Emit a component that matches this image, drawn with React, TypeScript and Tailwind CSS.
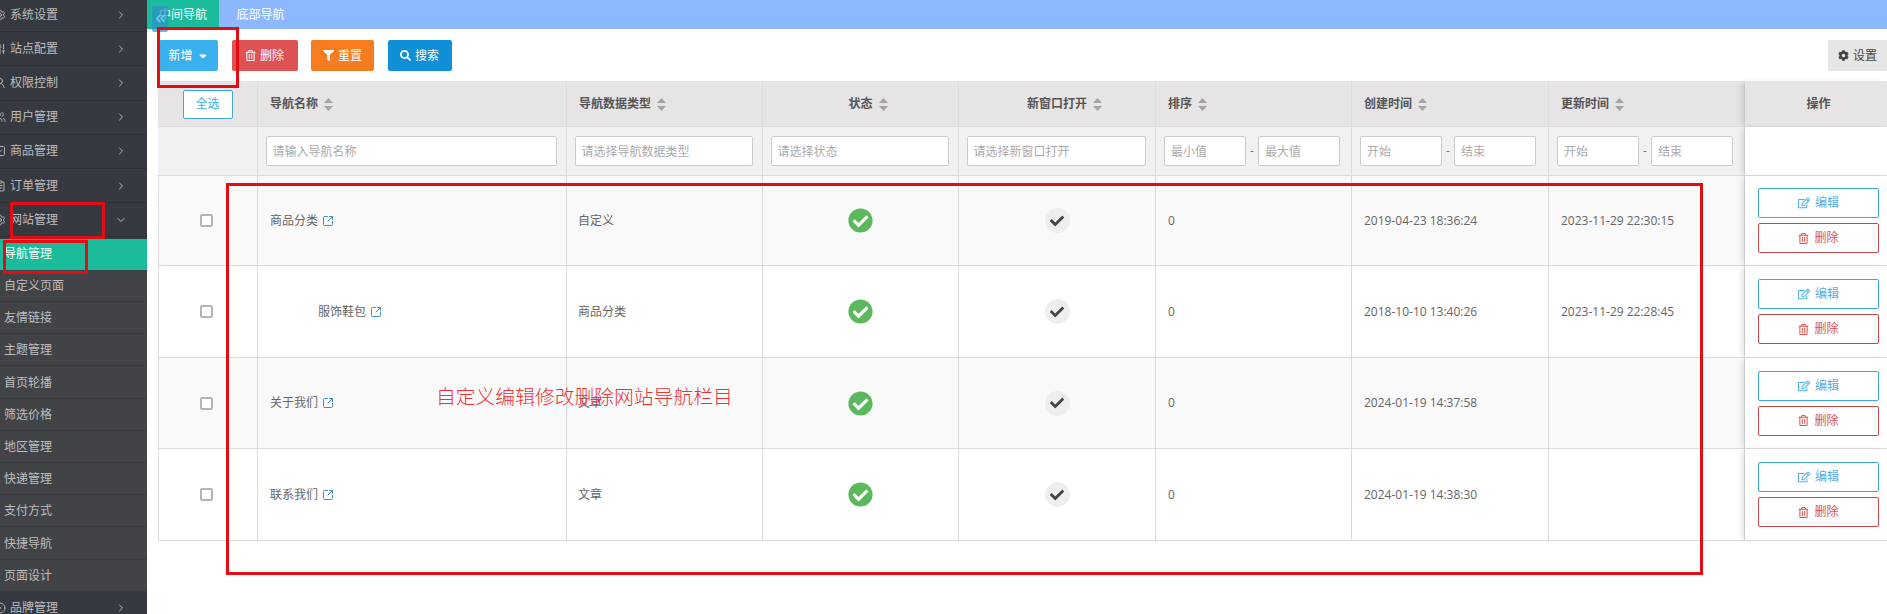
import React from "react";
import {
  ChevronRight,
  ChevronDown,
  ChevronsLeft,
  Settings,
  SlidersVertical,
  UserRound,
  Users,
  SquareCheck,
  ClipboardList,
  CircleDot,
  SquareArrowOutUpRight,
} from "lucide-react";
import {
  FaCaretDown,
  FaCheck,
  FaCheckCircle,
  FaCog,
  FaFilter,
  FaRegEdit,
  FaRegTrashAlt,
  FaSearch,
} from "react-icons/fa";

const FONT = { fontFamily: '"Open Sans","Noto Sans CJK SC",sans-serif' };

const topBefore = [
  { label: "系统设置", Icon: Settings },
  { label: "站点配置", Icon: SlidersVertical },
  { label: "权限控制", Icon: UserRound },
  { label: "用户管理", Icon: Users },
  { label: "商品管理", Icon: SquareCheck },
  { label: "订单管理", Icon: ClipboardList },
];
const subs = ["自定义页面", "友情链接", "主题管理", "首页轮播", "筛选价格", "地区管理", "快递管理", "支付方式", "快捷导航", "页面设计"];

function TopItem({ label, Icon, open }: { label: string; Icon: React.ComponentType<any>; open?: boolean }) {
  return (
    <div className="flex h-[34.2px] shrink-0 items-center border-b border-[#2e3034] bg-[#36393f] text-[12px] text-[#bdbec0]">
      <Icon size={12} className="ml-[-6px] mr-[4px] shrink-0 text-[#b0b1b4]" />
      <span className="flex-1">{label}</span>
      {open ? (
        <ChevronDown size={12} className="mr-[20px] text-[#b8b9bb]" />
      ) : (
        <ChevronRight size={12} className="mr-[20px] text-[#b8b9bb]" />
      )}
    </div>
  );
}

function Sidebar() {
  return (
    <aside className="flex h-[614px] w-[147px] shrink-0 flex-col overflow-hidden bg-[#36393f]">
      <div className="mt-[-2px]" />
      {topBefore.map((t) => (
        <TopItem key={t.label} {...t} />
      ))}
      <div className="mb-[1.6px]">
        <TopItem label="网站管理" Icon={Settings} open />
      </div>
      <div className="flex h-[31px] shrink-0 items-center bg-[#1abc9c] pl-[4px] text-[12px] text-white">导航管理</div>
      {subs.map((s) => (
        <div
          key={s}
          className="flex h-[32.2px] shrink-0 items-center border-b border-[#393b3f] bg-[#414347] pl-[4px] pt-[1px] text-[12px] text-[#bdbec0]"
        >
          {s}
        </div>
      ))}
      <TopItem label="品牌管理" Icon={CircleDot} />
    </aside>
  );
}

function Sort() {
  return (
    <svg width="9" height="13" viewBox="0 0 9 13" className="ml-[6px] inline-block shrink-0 fill-[#a5a5a5]">
      <path d="M4.5 0 L9 5 H0 Z" />
      <path d="M0 8 H9 L4.5 13 Z" />
    </svg>
  );
}

const headCell = "border-r border-b border-[#dcdcdc] bg-[#e6e4e5] pt-[1px] text-[12px] font-bold text-[#555]";
const filterCell = "border-r border-b border-[#dcdcdc] bg-[#f1f1f1]";
const inputCls =
  "h-[30px] min-w-0 rounded-[2px] border border-[#ccc] bg-white px-[6px] text-[12px] text-[#555] outline-none placeholder:text-[#aaa]";

function Head({ label, center }: { label: string; center?: boolean }) {
  return (
    <th className={headCell}>
      <div className={`flex items-center ${center ? "justify-center pl-[15px]" : "pl-[12px]"}`}>
        {label}
        <Sort />
      </div>
    </th>
  );
}

function TextFilter({ ph }: { ph: string }) {
  return (
    <td className={`${filterCell} pl-[7.5px] pr-[9.5px]`}>
      <input className={`${inputCls} w-full`} placeholder={ph} readOnly />
    </td>
  );
}

function RangeFilter({ a, b }: { a: string; b: string }) {
  return (
    <td className={`${filterCell} pl-[8px]`}>
      <div className="flex items-center">
        <input className={`${inputCls} w-[82px]`} placeholder={a} readOnly />
        <span className="w-[12px] shrink-0 text-center text-[12px] text-[#777]">-</span>
        <input className={`${inputCls} w-[82px]`} placeholder={b} readOnly />
      </div>
    </td>
  );
}

const rows = [
  { name: "商品分类", indent: false, type: "自定义", created: "2019-04-23 18:36:24", updated: "2023-11-29 22:30:15", h: "h-[90px]" },
  { name: "服饰鞋包", indent: true, type: "商品分类", created: "2018-10-10 13:40:26", updated: "2023-11-29 22:28:45", h: "h-[92px]" },
  { name: "关于我们", indent: false, type: "文章", created: "2024-01-19 14:37:58", updated: "", h: "h-[91px]" },
  { name: "联系我们", indent: false, type: "文章", created: "2024-01-19 14:38:30", updated: "", h: "h-[92px]" },
];

function Table() {
  const actionShadow = "shadow-[-5px_0_6px_-2px_rgba(0,0,0,0.12)]";
  return (
    <table className="w-[1729px] table-fixed border-separate border-spacing-0">
      <colgroup>
        <col className="w-[100px]" />
        <col className="w-[309px]" />
        <col className="w-[196px]" />
        <col className="w-[196px]" />
        <col className="w-[197px]" />
        <col className="w-[196px]" />
        <col className="w-[197px]" />
        <col className="w-[196px]" />
        <col className="w-[142px]" />
      </colgroup>
      <thead>
        <tr className="h-[46px]">
          <th className={headCell}>
            <button className="mx-auto block h-[29px] w-[50px] rounded-[2px] border border-[#3ea8dc] bg-white text-[12px] font-normal text-[#3bb0e8]">
              全选
            </button>
          </th>
          <Head label="导航名称" />
          <Head label="导航数据类型" />
          <Head label="状态" center />
          <Head label="新窗口打开" center />
          <Head label="排序" />
          <Head label="创建时间" />
          <Head label="更新时间" />
          <th className={`${headCell} border-r-0 pl-[5px] ${actionShadow}`}>操作</th>
        </tr>
        <tr className="h-[49px]">
          <td className={filterCell} />
          <TextFilter ph="请输入导航名称" />
          <TextFilter ph="请选择导航数据类型" />
          <TextFilter ph="请选择状态" />
          <TextFilter ph="请选择新窗口打开" />
          <RangeFilter a="最小值" b="最大值" />
          <RangeFilter a="开始" b="结束" />
          <RangeFilter a="开始" b="结束" />
          <td className={`border-b border-[#dcdcdc] bg-white ${actionShadow}`} />
        </tr>
      </thead>
      <tbody>
        {rows.map((r, i) => {
          const bg = i % 2 === 0 ? "bg-[#f9f9f9]" : "bg-white";
          const cell = `border-r border-b border-[#dcdcdc] ${bg} text-[12px] text-[#666]`;
          const dateCell = `${cell} pl-[12px] text-[12.5px]`;
          return (
            <tr key={r.name} className={r.h}>
              <td className={`${cell} border-l`}>
                <div className="mr-[4px] flex justify-center">
                  <span className="block h-[13px] w-[13px] rounded-[2px] border-2 border-[#b5b5b5] bg-white" />
                </div>
              </td>
              <td className={`${cell} pl-[12px]`}>
                <div className={`flex items-center gap-[4px] ${r.indent ? "pl-[48px]" : ""}`}>
                  {r.name}
                  <SquareArrowOutUpRight size={12} strokeWidth={2} className="text-[#428bca]" />
                </div>
              </td>
              <td className={`${cell} pl-[11px]`}>{r.type}</td>
              <td className={cell}>
                <div className="flex justify-center">
                  <FaCheckCircle size={25} className="text-[#5cb85c]" />
                </div>
              </td>
              <td className={cell}>
                <div className="flex justify-center">
                  <span className="flex h-[25px] w-[25px] items-center justify-center rounded-full bg-[#eeeeee]">
                    <FaCheck size={14} className="text-[#444]" />
                  </span>
                </div>
              </td>
              <td className={dateCell}>0</td>
              <td className={dateCell}>{r.created}</td>
              <td className={dateCell}>{r.updated}</td>
              <td className={`border-b border-[#dcdcdc] bg-white pl-[5px] ${actionShadow}`}>
                <div className="flex flex-col items-center gap-[5px]">
                  <button className="flex h-[30px] w-[121px] items-center justify-center gap-[5px] rounded-[2px] border border-[#3ea8dc] bg-white text-[12px] text-[#4fb0e6]">
                    <FaRegEdit size={12} />
                    编辑
                  </button>
                  <button className="flex h-[30px] w-[121px] items-center justify-center gap-[5px] rounded-[2px] border border-[#c9474a] bg-white text-[12px] text-[#d9534f]">
                    <FaRegTrashAlt size={11} />
                    删除
                  </button>
                </div>
              </td>
            </tr>
          );
        })}
      </tbody>
    </table>
  );
}

function Toolbar() {
  const btn = "flex h-[31px] items-center justify-center gap-[4px] rounded-[2px] text-[12px] text-white";
  return (
    <div className="flex items-center justify-between pb-[10px] pl-[12px] pt-[11px]">
      <div className="flex gap-[13.5px]">
        <button className={`${btn} w-[59px] gap-[1px] bg-[#3bb0ef]`}>
          新增
          <FaCaretDown size={12} />
        </button>
        <button className={`${btn} w-[66px] bg-[#dd5252]`}>
          <FaRegTrashAlt size={11} />
          删除
        </button>
        <button className={`${btn} w-[63px] bg-[#f67c1f]`}>
          <FaFilter size={11} />
          重置
        </button>
        <button className={`${btn} w-[64px] bg-[#0f8fd6]`}>
          <FaSearch size={11} />
          搜索
        </button>
      </div>
      <button className="flex h-[31px] w-[59px] items-center justify-center gap-[4px] bg-[#e6e6e6] text-[12px] text-[#444]">
        <FaCog size={11} />
        设置
      </button>
    </div>
  );
}

function RedBox({ className }: { className: string }) {
  return <div className={`pointer-events-none absolute border-[3px] border-[#e30c12] ${className}`} />;
}

export default function App() {
  return (
    <div className="relative flex h-[614px] w-[1887px] overflow-hidden bg-white" style={FONT}>
      <Sidebar />
      <main className="min-w-0 flex-1">
        <div className="flex h-[29px] items-stretch bg-[#8db7ff] pt-0 text-[12px] text-white">
          <div className="flex items-center bg-[#1abc9c] px-[12px] pt-[1px]">中间导航</div>
          <div className="flex items-center px-[17.5px] pt-[1px]">底部导航</div>
        </div>
        <Toolbar />
        <div className="pl-[11px]">
          <Table />
        </div>
      </main>

      <div className="absolute left-[152px] top-[6px] flex h-[26px] w-[16px] items-start justify-center rounded-b-[2px] bg-[#2f8fc8]/70 pt-[5px]">
        <ChevronsLeft size={15} strokeWidth={2.5} className="text-[#6fd0f2]" />
      </div>

      <RedBox className="left-[157px] top-[27px] h-[61px] w-[82px]" />
      <RedBox className="left-[10px] top-[202px] h-[37px] w-[95px]" />
      <RedBox className="left-[3px] top-[240px] h-[34px] w-[85px]" />
      <RedBox className="left-[226px] top-[183px] h-[392px] w-[1477px]" />

      <div className="absolute left-[436px] top-[383px] whitespace-nowrap text-[19.8px] font-light leading-[28px] text-[#e8333a]">
        自定义编辑修改删除网站导航栏目
      </div>
    </div>
  );
}
